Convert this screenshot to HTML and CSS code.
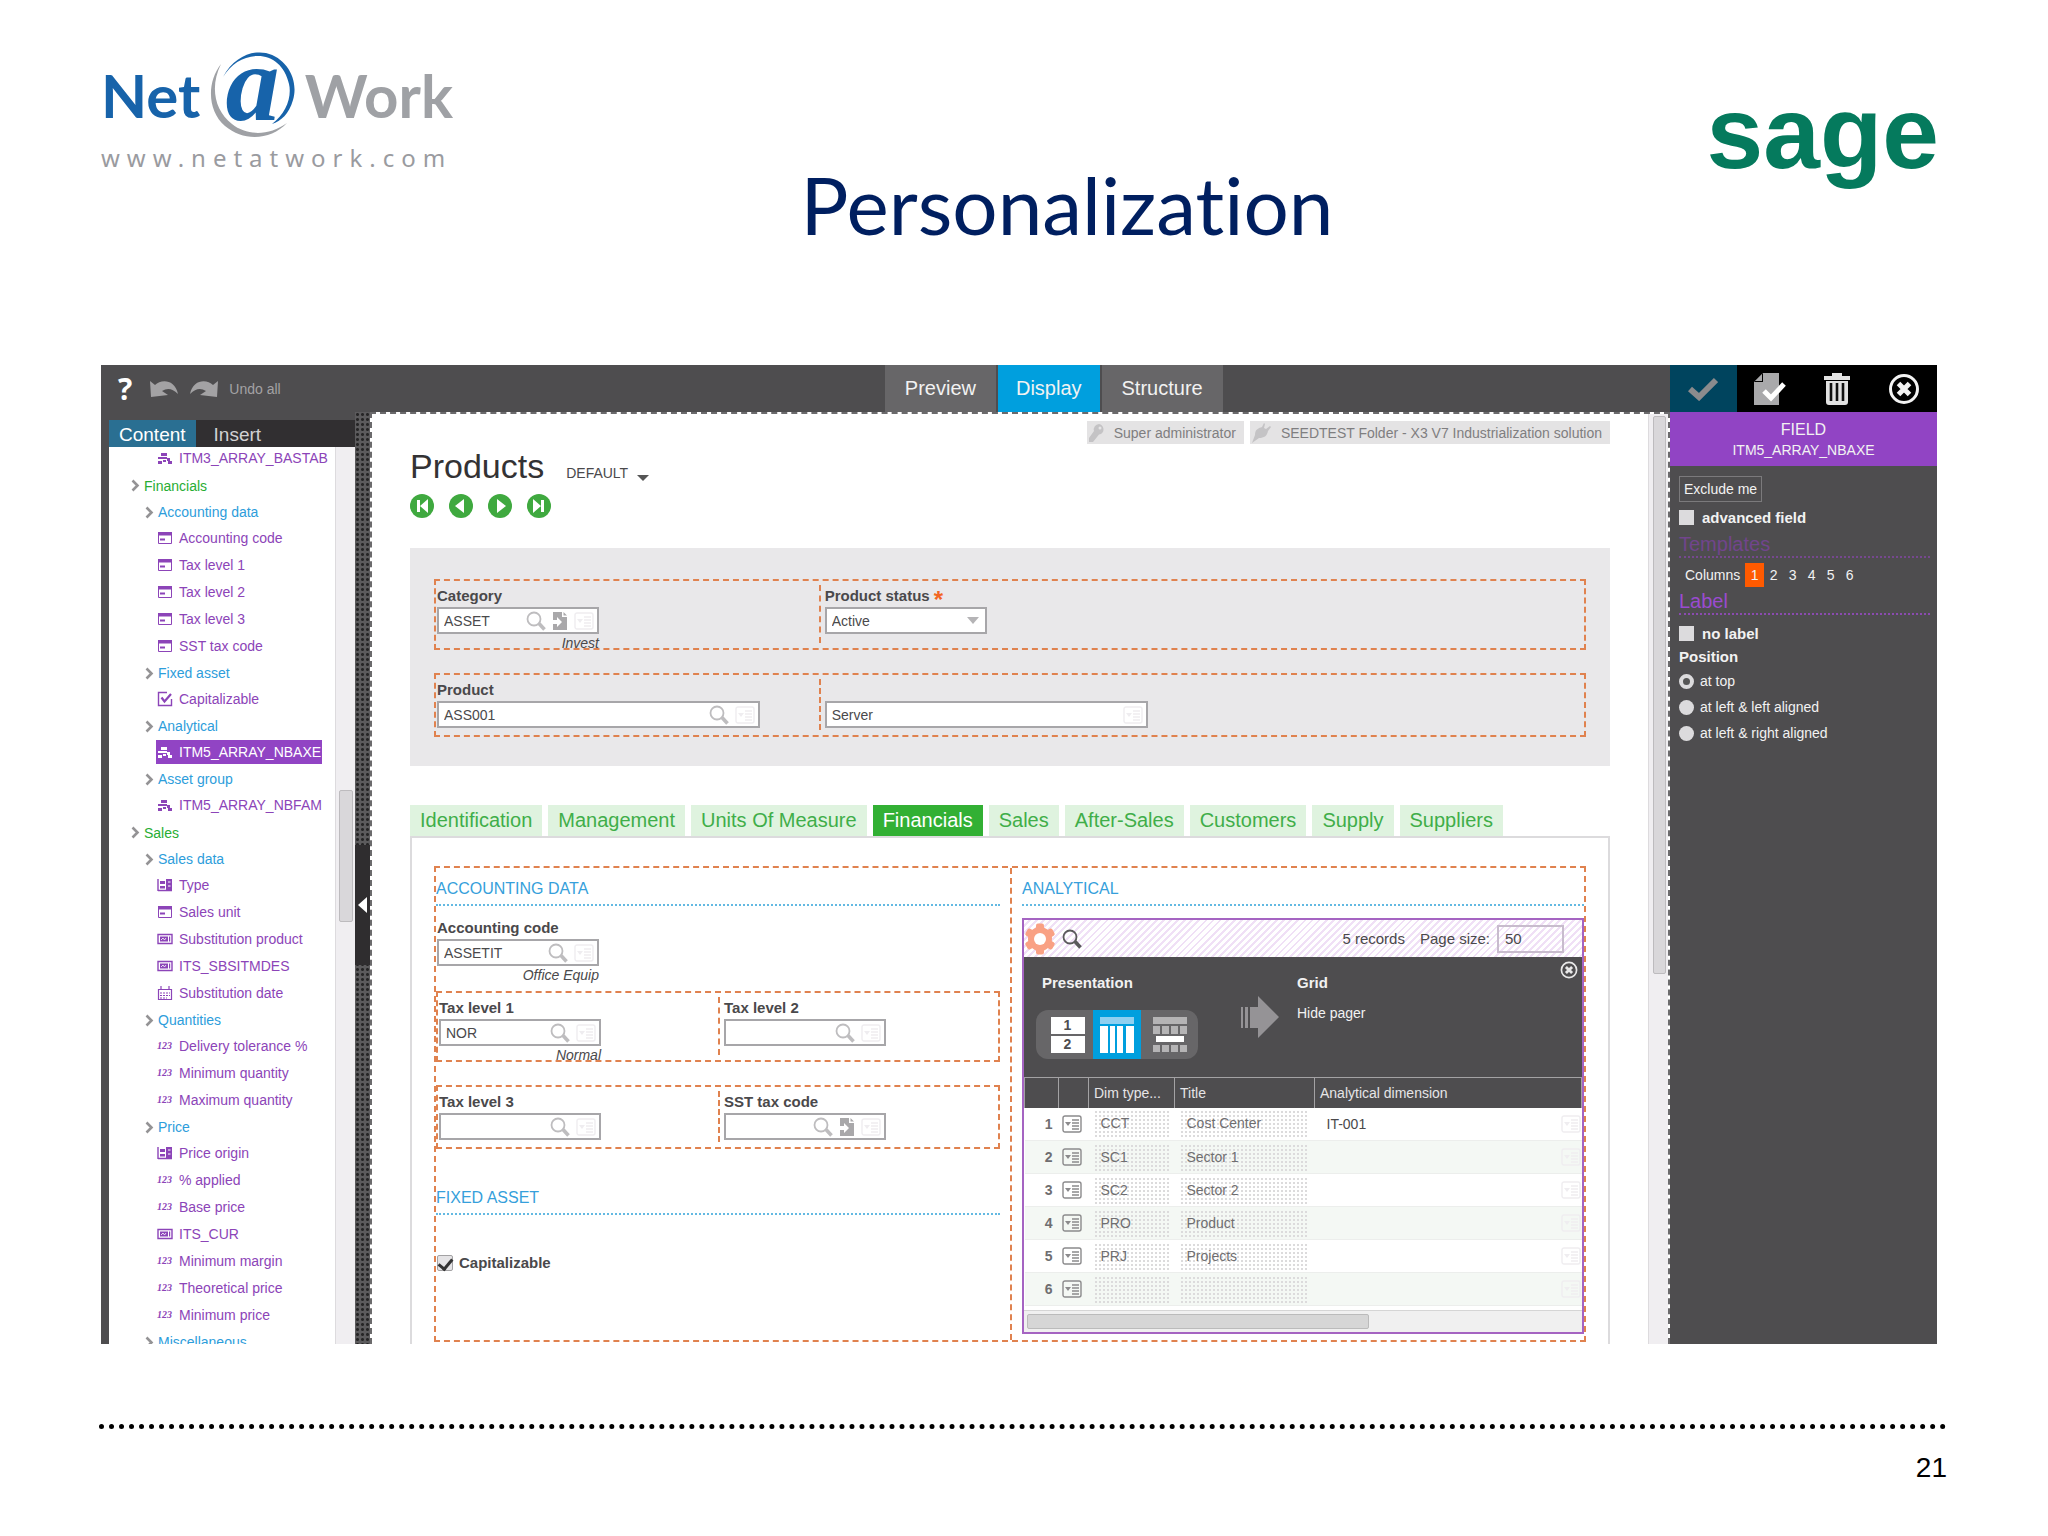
FILE: index.html
```html
<!DOCTYPE html>
<html lang="en">
<head>
  <meta charset="UTF-8">
  <meta name="viewport" content="width=device-width, initial-scale=1.0">
  <title>Personalization</title>
  <link rel="stylesheet" href="styles.css">
</head>
<body>

<!-- Shared icons -->
<svg class="sprite" aria-hidden="true">
  <symbol id="i-chevron" viewBox="0 0 9 13"><path d="M1.500 1.500L6.500 6.500L1.500 11.500" fill="none" stroke="currentColor" stroke-width="2.600"/></symbol>
  <symbol id="i-array" viewBox="0 0 16 16"><path d="M4 3h6v3H4zM1 7h9v2H1zM10 8h3v3h-3zM1 11h4v3H1zM6 10h3v2H6zM11 11h4v3h-4z" fill="currentColor"/></symbol>
  <symbol id="i-form" viewBox="0 0 16 16"><path d="M1.500 2.500h13v11h-13z" fill="none" stroke="currentColor"/><path d="M1 2h14v3.500H1zM3 8.500h5v2H3z" fill="currentColor"/></symbol>
  <symbol id="i-tick" viewBox="0 0 16 16"><path d="M10 1.500H1.500v13h13V8" fill="none" stroke="currentColor" stroke-width="1.400"/><path d="M4.500 6.500l3 4L14 3" fill="none" stroke="currentColor" stroke-width="2.200"/></symbol>
  <symbol id="i-combo" viewBox="0 0 16 16"><path d="M1 2v12M1 13.500h14" fill="none" stroke="currentColor" stroke-width="1.400"/><path d="M3 4h5v3H3zM3 9h5v2.500H3zM9 2h6v12H9z" fill="currentColor"/><path d="M11 5h2.500M11 9h2.500" stroke="#fff"/></symbol>
  <symbol id="i-text" viewBox="0 0 16 16"><path d="M1 3.500h14v9H1z" fill="none" stroke="currentColor" stroke-width="1.400"/><path d="M3 5.500h8v5H3zM12 5.500h1.200v5H12z" fill="currentColor"/><path d="M4 9l2-2 1.500 2L9 7" stroke="#fff" fill="none" stroke-width=".8"/></symbol>
  <symbol id="i-date" viewBox="0 0 16 16"><path d="M1.500 4.500h13v10h-13zM4 1v4M12 1v4" fill="none" stroke="currentColor" stroke-width="1.200"/><path d="M3 8h10M3 10.500h10M3 13h7" stroke="currentColor" stroke-dasharray="2 1"/></symbol>
  <symbol id="i-search" viewBox="0 0 20 20"><circle cx="8" cy="8" r="6.500" fill="none" stroke="currentColor" stroke-width="1.800"/><path d="M13 12.500l5.500 6" stroke="currentColor" stroke-width="3.600"/></symbol>
  <symbol id="i-goto" viewBox="0 0 16 20"><path d="M1 1h9v5h5v13H1v-6h4v3l5-5-5-5v3H1zM11.500 1L15 4.500h-3.500z" fill="currentColor"/></symbol>
  <symbol id="i-list" viewBox="0 0 20 18"><rect x="1" y="1" width="18" height="16" rx="2" fill="none" stroke="currentColor" stroke-width="1.400"/><path d="M3 7h6L6 11z" fill="currentColor"/><path d="M10 5h7M10 8h7M10 11h7M10 14h7" stroke="currentColor" stroke-width="1.400"/></symbol>
  <symbol id="i-close" viewBox="0 0 32 32"><circle cx="16" cy="16" r="13.500" fill="none" stroke="currentColor" stroke-width="3"/><path d="M10.500 10.500l11 11M21.500 10.500l-11 11" stroke="currentColor" stroke-width="5"/></symbol>
  <symbol id="i-undo" viewBox="0 0 30 20"><path d="M1 2l5 4c6-6 20-6 23 9C23 9 18 9 13 12l6 4L2 18z" fill="currentColor"/></symbol>
</svg>

<div class="slide">
  <header class="slide-header">
    <div class="brand">
      <div class="brand-name">
        <span class="brand-net">Net</span>
        <span class="brand-at">
          <svg viewBox="0 0 88 90" width="88" height="90" aria-hidden="true">
            <path d="M14 27C24 8 42 0 57 3C78 8 90 30 84 50C80 64 72 71 63 74C77 64 83 47 80 34C76 15 62 5 47 6C33 7 22 14 14 27Z" fill="#1763aa"/>
            <path d="M12 14C-2 32-2 60 16 76C35 92 62 90 78 73C60 86 38 86 23 74C5 60 1 36 12 14Z" fill="#9fa1a5"/>
          </svg>
          <i>a</i>
        </span>
        <span class="brand-work">Work</span>
      </div>
      <div class="brand-url">www.netatwork.com</div>
    </div>
    <h1>Personalization</h1>
    <div class="sage">sage</div>
  </header>

  <div class="app">
    <div class="topbar">
      <div class="topbar-left">
        <button class="help">?</button>
        <button aria-label="Undo"><svg width="30" height="20"><use href="#i-undo"/></svg></button>
        <button aria-label="Redo"><svg class="flip" width="30" height="20"><use href="#i-undo"/></svg></button>
        <button class="undo-all">Undo all</button>
      </div>
      <nav class="modes">
        <button>Preview</button>
        <button class="active">Display</button>
        <button>Structure</button>
      </nav>
      <div class="topbar-right"></div>
    </div>

    <aside class="sidebar">
      <div class="side-tabs">
        <button class="active">Content</button>
        <button>Insert</button>
      </div>
      <div class="side-body">
        <ul class="tree">
          <li><a href="#"><svg><use href="#i-array"/></svg>ITM3_ARRAY_BASTAB</a></li>
          <li class="l1"><a href="#"><svg><use href="#i-chevron"/></svg>Financials</a></li>
          <li class="l2"><a href="#"><svg><use href="#i-chevron"/></svg>Accounting data</a></li>
          <li><a href="#"><svg><use href="#i-form"/></svg>Accounting code</a></li>
          <li><a href="#"><svg><use href="#i-form"/></svg>Tax level 1</a></li>
          <li><a href="#"><svg><use href="#i-form"/></svg>Tax level 2</a></li>
          <li><a href="#"><svg><use href="#i-form"/></svg>Tax level 3</a></li>
          <li><a href="#"><svg><use href="#i-form"/></svg>SST tax code</a></li>
          <li class="l2"><a href="#"><svg><use href="#i-chevron"/></svg>Fixed asset</a></li>
          <li><a href="#"><svg><use href="#i-tick"/></svg>Capitalizable</a></li>
          <li class="l2"><a href="#"><svg><use href="#i-chevron"/></svg>Analytical</a></li>
          <li class="selected"><a href="#"><svg><use href="#i-array"/></svg>ITM5_ARRAY_NBAXE</a></li>
          <li class="l2"><a href="#"><svg><use href="#i-chevron"/></svg>Asset group</a></li>
          <li><a href="#"><svg><use href="#i-array"/></svg>ITM5_ARRAY_NBFAM</a></li>
          <li class="l1"><a href="#"><svg><use href="#i-chevron"/></svg>Sales</a></li>
          <li class="l2"><a href="#"><svg><use href="#i-chevron"/></svg>Sales data</a></li>
          <li><a href="#"><svg><use href="#i-combo"/></svg>Type</a></li>
          <li><a href="#"><svg><use href="#i-form"/></svg>Sales unit</a></li>
          <li><a href="#"><svg><use href="#i-text"/></svg>Substitution product</a></li>
          <li><a href="#"><svg><use href="#i-text"/></svg>ITS_SBSITMDES</a></li>
          <li><a href="#"><svg><use href="#i-date"/></svg>Substitution date</a></li>
          <li class="l2"><a href="#"><svg><use href="#i-chevron"/></svg>Quantities</a></li>
          <li><a href="#"><span class="num">123</span>Delivery tolerance %</a></li>
          <li><a href="#"><span class="num">123</span>Minimum quantity</a></li>
          <li><a href="#"><span class="num">123</span>Maximum quantity</a></li>
          <li class="l2"><a href="#"><svg><use href="#i-chevron"/></svg>Price</a></li>
          <li><a href="#"><svg><use href="#i-combo"/></svg>Price origin</a></li>
          <li><a href="#"><span class="num">123</span>% applied</a></li>
          <li><a href="#"><span class="num">123</span>Base price</a></li>
          <li><a href="#"><svg><use href="#i-text"/></svg>ITS_CUR</a></li>
          <li><a href="#"><span class="num">123</span>Minimum margin</a></li>
          <li><a href="#"><span class="num">123</span>Theoretical price</a></li>
          <li><a href="#"><span class="num">123</span>Minimum price</a></li>
          <li class="l2"><a href="#"><svg><use href="#i-chevron"/></svg>Miscellaneous</a></li>
        </ul>
        <div class="scroll side-scroll"><div class="thumb"></div></div>
      </div>
    </aside>
    <div class="splitter">
      <button aria-label="Collapse panel"><svg width="9" height="16" viewBox="0 0 9 16"><path d="M9 0v16L0 8z" fill="#fff"/></svg></button>
    </div>

    <main class="main">
      <div class="page">
        <div class="badges">
          <span class="badge"><svg width="16" height="20" viewBox="0 0 16 20"><path d="M10 1a5.500 5.500 0 0 1 2 10l-2 .5L4 19H0v-4l5-7A5.500 5.500 0 0 1 10 1z" fill="#c4c3c5"/><circle cx="11" cy="5" r="1.500" fill="#e6e5e6"/></svg>Super administrator</span>
          <span class="badge"><svg width="20" height="20" viewBox="0 0 20 20"><path d="M0 20l3-8c0-6 4-7 7-8l2-4 1 1-1 4 2 1 4-3 1 1-3 4c-1 5-4 7-9 7z" fill="#c4c3c5"/></svg>SEEDTEST Folder - X3 V7 Industrialization solution</span>
        </div>
        <div class="title-row">
          <h2>Products</h2>
          <button class="variant">DEFAULT <svg width="12" height="6" viewBox="0 0 12 6"><path d="M0 0h12L6 6z" fill="#555"/></svg></button>
        </div>
        <div class="record-nav">
          <button aria-label="First"><svg viewBox="0 0 24 24"><path d="M7 6v12h3V6zM18 5v14l-8-7z" fill="#fff"/></svg></button>
          <button aria-label="Previous"><svg viewBox="0 0 24 24"><path d="M15 5v14L6 12z" fill="#fff"/></svg></button>
          <button aria-label="Next"><svg viewBox="0 0 24 24"><path d="M9 5v14l9-7z" fill="#fff"/></svg></button>
          <button aria-label="Last"><svg viewBox="0 0 24 24"><path d="M17 6v12h-3V6zM6 5v14l8-7z" fill="#fff"/></svg></button>
        </div>

        <section class="summary">
          <div class="row thirds with-hint">
            <div class="cell">
              <label for="category">Category</label>
              <div class="box">
                <input id="category" type="text" value="ASSET">
                <svg class="ic"><use href="#i-search"/></svg><svg class="ic goto"><use href="#i-goto"/></svg><svg class="ic faint"><use href="#i-list"/></svg>
                <span class="hint">Invest</span>
              </div>
            </div>
            <div class="cell">
              <label for="status">Product status <b class="req">*</b></label>
              <div class="box">
                <select id="status"><option>Active</option></select>
                <svg class="caret" width="12" height="7" viewBox="0 0 12 7"><path d="M0 0h12L6 7z" fill="#b5b4b6"/></svg>
              </div>
            </div>
          </div>
          <div class="row thirds">
            <div class="cell">
              <label for="product">Product</label>
              <div class="box wide">
                <input id="product" type="text" value="ASS001">
                <svg class="ic"><use href="#i-search"/></svg><svg class="ic faint"><use href="#i-list"/></svg>
              </div>
            </div>
            <div class="cell">
              <label for="description">&nbsp;</label>
              <div class="box wide">
                <input id="description" type="text" value="Server">
                <svg class="ic faint"><use href="#i-list"/></svg>
              </div>
            </div>
          </div>
        </section>

        <nav class="tabs">
          <button>Identification</button>
          <button>Management</button>
          <button>Units Of Measure</button>
          <button class="active">Financials</button>
          <button>Sales</button>
          <button>After-Sales</button>
          <button>Customers</button>
          <button>Supply</button>
          <button>Suppliers</button>
        </nav>

        <div class="panel">
          <div class="columns">
            <section class="col-left">
              <h3>ACCOUNTING DATA</h3>
              <div class="field">
                <label for="acc-code">Accounting code</label>
                <div class="box">
                  <input id="acc-code" type="text" value="ASSETIT">
                  <svg class="ic"><use href="#i-search"/></svg><svg class="ic faint"><use href="#i-list"/></svg>
                  <span class="hint">Office Equip</span>
                </div>
              </div>
              <div class="row halves with-hint">
                <div class="cell">
                  <label for="tax1">Tax level 1</label>
                  <div class="box">
                    <input id="tax1" type="text" value="NOR">
                    <svg class="ic"><use href="#i-search"/></svg><svg class="ic faint"><use href="#i-list"/></svg>
                    <span class="hint">Normal</span>
                  </div>
                </div>
                <div class="cell">
                  <label for="tax2">Tax level 2</label>
                  <div class="box">
                    <input id="tax2" type="text">
                    <svg class="ic"><use href="#i-search"/></svg><svg class="ic faint"><use href="#i-list"/></svg>
                  </div>
                </div>
              </div>
              <div class="row halves">
                <div class="cell">
                  <label for="tax3">Tax level 3</label>
                  <div class="box">
                    <input id="tax3" type="text">
                    <svg class="ic"><use href="#i-search"/></svg><svg class="ic faint"><use href="#i-list"/></svg>
                  </div>
                </div>
                <div class="cell">
                  <label for="sst">SST tax code</label>
                  <div class="box">
                    <input id="sst" type="text">
                    <svg class="ic"><use href="#i-search"/></svg><svg class="ic goto"><use href="#i-goto"/></svg><svg class="ic faint"><use href="#i-list"/></svg>
                  </div>
                </div>
              </div>
              <h3 class="second">FIXED ASSET</h3>
              <label class="check"><input type="checkbox" checked>Capitalizable</label>
            </section>

            <section class="col-right">
              <h3>ANALYTICAL</h3>
              <div class="grid">
                <div class="grid-bar">
                  <svg width="32" height="32" viewBox="-16 -16 32 32"><g fill="#f9a184"><circle r="12"/><rect x="-4" y="-15.500" width="8" height="31" rx="2"/><rect x="-4" y="-15.500" width="8" height="31" rx="2" transform="rotate(60)"/><rect x="-4" y="-15.500" width="8" height="31" rx="2" transform="rotate(120)"/></g><circle r="6" fill="#fff"/></svg>
                  <svg class="find" width="20" height="20"><use href="#i-search"/></svg>
                  <span class="count">5 records</span>
                  <label for="page-size">Page size:</label>
                  <input id="page-size" type="text" value="50">
                </div>
                <div class="options">
                  <div class="presentation">
                    <h4>Presentation</h4>
                    <div class="switch">
                      <button class="pages" aria-label="Form"><span>1</span><span>2</span></button>
                      <button class="active" aria-label="Grid"><svg width="34" height="36" viewBox="0 0 34 36"><path d="M0 0h34v7H0z" fill="#8fd0f0"/><path d="M0 9h8v27H0zM10 9h5v27h-5zM17 9h6v27h-6zM26 9h8v27h-8z" fill="#fff"/></svg></button>
                      <button aria-label="Mixed"><svg width="34" height="36" viewBox="0 0 34 36"><path d="M0 0h34v7H0zM0 9h7v8H0zM9 9h7v8H9zM18 9h7v8h-7zM27 9h7v8h-7zM0 28h7v7H0zM9 28h7v7H9zM18 28h7v7h-7zM27 28h7v7h-7z" fill="#b5b4b5"/><path d="M3 19h28v6H3z" fill="#fff"/></svg></button>
                    </div>
                  </div>
                  <svg class="arrow" width="38" height="42" viewBox="0 0 38 42"><path d="M0 11h2v21H0zM4 11h3v21H4zM9 11h8V0l21 21-21 21V32H9z" fill="#959396"/></svg>
                  <div class="grid-opts">
                    <h4>Grid</h4>
                    <a href="#">Hide pager</a>
                  </div>
                  <button class="close" aria-label="Close"><svg width="18" height="18"><use href="#i-close"/></svg></button>
                </div>
                <table>
                  <thead>
                    <tr><th class="c-num"></th><th class="c-act"></th><th class="c-dim">Dim type...</th><th class="c-title">Title</th><th>Analytical dimension</th></tr>
                  </thead>
                  <tbody>
                    <tr><td class="n">1</td><td><svg class="ic act"><use href="#i-list"/></svg></td><td><div class="ro">CCT</div></td><td><div class="ro">Cost Center</div></td><td><div class="val">IT-001<svg class="ic faint"><use href="#i-list"/></svg></div></td></tr>
                    <tr><td class="n">2</td><td><svg class="ic act"><use href="#i-list"/></svg></td><td><div class="ro">SC1</div></td><td><div class="ro">Sector 1</div></td><td><div class="val"><svg class="ic faint"><use href="#i-list"/></svg></div></td></tr>
                    <tr><td class="n">3</td><td><svg class="ic act"><use href="#i-list"/></svg></td><td><div class="ro">SC2</div></td><td><div class="ro">Sector 2</div></td><td><div class="val"><svg class="ic faint"><use href="#i-list"/></svg></div></td></tr>
                    <tr><td class="n">4</td><td><svg class="ic act"><use href="#i-list"/></svg></td><td><div class="ro">PRO</div></td><td><div class="ro">Product</div></td><td><div class="val"><svg class="ic faint"><use href="#i-list"/></svg></div></td></tr>
                    <tr><td class="n">5</td><td><svg class="ic act"><use href="#i-list"/></svg></td><td><div class="ro">PRJ</div></td><td><div class="ro">Projects</div></td><td><div class="val"><svg class="ic faint"><use href="#i-list"/></svg></div></td></tr>
                    <tr><td class="n">6</td><td><svg class="ic act"><use href="#i-list"/></svg></td><td><div class="ro"></div></td><td><div class="ro"></div></td><td><div class="val"><svg class="ic faint"><use href="#i-list"/></svg></div></td></tr>
                  </tbody>
                </table>
                <div class="hscroll"><div class="thumb"></div></div>
              </div>
            </section>
          </div>
        </div>
      </div>
      <div class="scroll main-scroll"><div class="thumb"></div></div>
    </main>

    <aside class="props">
      <div class="actions">
        <button class="apply" aria-label="Apply"><svg width="30" height="24" viewBox="0 0 30 24"><path d="M2 12l9 8L28 3" fill="none" stroke="#8b8b8d" stroke-width="6"/></svg></button>
        <button aria-label="Save"><svg width="34" height="34" viewBox="0 0 34 34"><path d="M10 1h16v32H1V10z" fill="#a9a9ab"/><path d="M1 10l9-9v9z" fill="#000"/><path d="M2 9l7-7v7z" fill="#a9a9ab"/><path d="M11 19l7 7L31 12" fill="none" stroke="#fff" stroke-width="5"/></svg></button>
        <button aria-label="Delete"><svg width="26" height="34" viewBox="0 0 26 34"><path d="M0 4h8V1h10v3h8v4H0zM2 9h22v21q0 3-3 3H5q-3 0-3-3z" fill="#e2e2e2"/><path d="M7 11v18M13 11v18M19 11v18" stroke="#111" stroke-width="2.600"/></svg></button>
        <button aria-label="Close"><svg width="32" height="32"><use href="#i-close"/></svg></button>
      </div>
      <div class="props-title"><span>FIELD</span><small>ITM5_ARRAY_NBAXE</small></div>
      <div class="props-body">
        <button class="exclude">Exclude me</button>
        <label class="opt bold"><input type="checkbox">advanced field</label>
        <h5 class="dim">Templates</h5>
        <div class="cols">
          <span>Columns</span>
          <button class="active">1</button><button>2</button><button>3</button><button>4</button><button>5</button><button>6</button>
        </div>
        <h5>Label</h5>
        <label class="opt bold first">
          <input type="checkbox">no label
        </label>
        <div class="legend">Position</div>
        <label class="opt"><input type="radio" name="position" checked>at top</label>
        <label class="opt"><input type="radio" name="position">at left &amp; left aligned</label>
        <label class="opt"><input type="radio" name="position">at left &amp; right aligned</label>
      </div>
    </aside>
  </div>

  <footer class="slide-footer">21</footer>
</div>

</body>
</html>
```

FILE: styles.css
```css
* {
  box-sizing: border-box;
}

body {
  margin: 0;
  background-color: #fff;
  font-family: "Liberation Sans", Arial, sans-serif;
  font-size: 14px;
  color: #4a494b;
}

button, input, select {
  font: inherit;
  color: inherit;
  margin: 0;
  padding: 0;
  border: none;
  background: none;
}

a {
  color: inherit;
  text-decoration: none;
}

svg {
  display: block;
  flex: none;
}

h1, h2, h3, h4, h5, ul {
  margin: 0;
  padding: 0;
}

.sprite {
  position: absolute;
  width: 0;
  height: 0;
}

/* Slide */
.slide {
  display: grid;
  grid-template-rows: auto 1fr auto;
  height: 100vh;
}

.slide-header {
  display: flex;
  height: 365px;
  padding: 0 109px 0 101px;
}

.brand {
  width: 352px;
  padding-top: 50px;
}

.brand-name {
  display: flex;
  align-items: center;
  justify-content: space-between;
  height: 90px;
  font-family: Lato, sans-serif;
  font-size: 60px;
  font-weight: bold;
  line-height: 88px;
}

.brand-net {
  color: #1763aa;
}

.brand-at {
  display: grid;
  width: 88px;
  place-items: center;
}

.brand-at > * {
  grid-area: 1 / 1;
}

.brand-at i {
  font-family: "Liberation Serif", serif;
  font-size: 108px;
  line-height: 68px;
  height: 90px;
  color: #1763aa;
}

.brand-work {
  color: #9fa1a5;
}

.brand-url {
  font-family: "Noto Sans", sans-serif;
  font-size: 24px;
  line-height: 36px;
  letter-spacing: 7px;
  white-space: nowrap;
  color: #9a9b9f;
}

.slide-header h1 {
  flex: 1;
  padding-top: 156px;
  text-align: center;
  font-family: Lato, sans-serif;
  font-size: 80px;
  font-weight: normal;
  font-variant-ligatures: none;
  line-height: 96px;
  color: #001f60;
}

.sage {
  width: 258px;
  padding-top: 85px;
  text-align: right;
  font-size: 102px;
  font-weight: bold;
  line-height: 96px;
  color: #057a5d;
}

.slide-footer {
  height: 192px;
  margin: 0 101px 0 99px;
  padding-top: 80px;
  text-align: right;
  font-size: 28px;
  line-height: 34px;
  color: #000;
}

.slide-footer::before {
  content: "";
  display: block;
  margin-bottom: 22px;
  border-top: 5px dotted #000;
}

/* Application */
.app {
  display: grid;
  grid-template-columns: 254px 15px 1fr 267px;
  grid-template-rows: 47px 1fr;
  min-height: 0;
  margin: 0 111px 0 101px;
  overflow: hidden;
  background-color: #4e4d4f;
}

.topbar {
  grid-column: 1 / 4;
  display: flex;
}

.topbar-left {
  flex: 12;
  display: flex;
  align-items: center;
  gap: 10px;
  padding-left: 17px;
  color: #a3a2a4;
}

.topbar-right {
  flex: 7;
}

.topbar .help {
  margin-right: 7px;
  font-family: "Open Sans", sans-serif;
  font-size: 30px;
  font-weight: bold;
  line-height: 40px;
  color: #fff;
}

.flip {
  transform: scaleX(-1);
}

.modes {
  display: flex;
  gap: 2px;
}

.modes button {
  padding: 0 20px;
  font-size: 20px;
  background-color: #676668;
  color: #f2f2f2;
}

.modes .active {
  padding: 0 18px;
  background-color: #009fde;
}

/* Left side */
.sidebar {
  grid-row: 2;
  display: flex;
  flex-direction: column;
  min-height: 0;
  padding: 8px 0 0 8px;
}

.side-tabs {
  display: flex;
  height: 27px;
  background-color: #312f31;
}

.side-tabs button {
  padding: 2px 10px 0;
  font-size: 19px;
  color: #d2d1d3;
}

.side-tabs button + button {
  padding-left: 18px;
}

.side-tabs .active {
  background-color: #2a6f92;
  color: #fff;
}

.side-body {
  flex: 1;
  display: flex;
  min-height: 0;
  overflow: hidden;
  background-color: #fff;
}

.tree {
  flex: 1;
  margin-top: -3px;
  list-style: none;
  color: #8c44b8;
}

.tree li {
  display: flex;
  align-items: center;
  height: 27px;
  padding-left: 47px;
}

.tree a {
  display: flex;
  align-items: center;
  gap: 6px;
  height: 24px;
  padding: 0 1px;
  white-space: nowrap;
}

.tree svg {
  width: 16px;
  height: 16px;
}

.tree .l1 svg, .tree .l2 svg {
  width: 9px;
  height: 13px;
  color: #949395;
}

.tree .l1, .tree .l2 {
  padding-top: 2px;
}

.tree .l1 {
  padding-left: 21px;
  color: #27ad33;
}

.tree .l2 {
  height: 26px;
  padding-left: 35px;
  color: #2d9ddb;
}

.tree .l1 a, .tree .l2 a {
  gap: 4px;
}

.tree .selected a {
  background-color: #9144c4;
  color: #fff;
}

.num {
  width: 16px;
  font-family: "Liberation Serif", serif;
  font-size: 10px;
  font-style: italic;
  font-weight: bold;
}

.scroll {
  padding: 0 4px;
  border-left: 1px solid #dddbde;
  background-color: #f0eef1;
}

.scroll .thumb {
  border: 1px solid #bdbbbe;
  border-radius: 2px;
  background-color: #d9d7da;
}

.side-scroll {
  width: 20px;
  padding: 343px 2px 0 3px;
}

.side-scroll .thumb {
  height: 132px;
}

.splitter {
  grid-row: 2;
  display: flex;
  align-items: center;
  padding-top: 54px;
  background: radial-gradient(circle, #262526 1px, transparent 2px) 0 0 / 5px 5px #5c5b5d;
}

.splitter button {
  display: grid;
  place-items: center;
  width: 15px;
  height: 120px;
  background-color: #2f2d2f;
}

/* Main page */
.main {
  grid-row: 2;
  display: flex;
  min-width: 0;
  min-height: 0;
  overflow: hidden;
  border: 2px dashed #6b6a6c;
  border-bottom: none;
  background-color: #fff;
}

.page {
  flex: 1;
  min-width: 0;
  padding: 7px 38px 0 38px;
}

.main-scroll {
  width: 20px;
  padding: 2px 2px 0 4px;
}

.main-scroll .thumb {
  height: 558px;
}

.badges {
  display: flex;
  justify-content: flex-end;
  gap: 6px;
}

.badge {
  display: flex;
  align-items: center;
  gap: 9px;
  height: 23px;
  padding: 0 8px 0 2px;
  background-color: #e4e3e4;
  color: #7f7e80;
}

.title-row {
  display: flex;
  align-items: baseline;
  gap: 22px;
  margin-top: 3px;
}

.title-row h2 {
  font-size: 34px;
  font-weight: normal;
  line-height: 38px;
  color: #333234;
}

.variant {
  display: flex;
  align-items: flex-end;
  gap: 9px;
}

.record-nav {
  display: flex;
  gap: 15px;
  margin: 9px 0 30px;
}

.record-nav button {
  width: 24px;
  height: 24px;
  border-radius: 50%;
  background-color: #3fa93f;
}

.summary {
  padding: 31px 24px 29px;
  background-color: #e9e8ea;
}

/* Dashed layout rows */
.row {
  display: grid;
  padding: 4px 0 5px;
  border: 2px dashed #e0824f;
}

.row + .row {
  margin-top: 23px;
}

.thirds {
  grid-template-columns: 1fr 2fr;
}

.halves {
  grid-template-columns: 1fr 1fr;
}

.cell {
  padding: 2px 0 2px 1px;
}

.with-hint .cell {
  padding-bottom: 9px;
}

.cell + .cell {
  padding-left: 4px;
  border-left: 2px dashed #e0824f;
}

.cell label, .field label {
  display: block;
  height: 20px;
  font-size: 15px;
  font-weight: bold;
  line-height: 18px;
}

.req {
  font-size: 24px;
  line-height: 0;
  vertical-align: -7px;
  color: #f26522;
}

.box {
  position: relative;
  display: flex;
  align-items: center;
  gap: 6px;
  width: 162px;
  height: 27px;
  padding: 0 3px 0 5px;
  border: 2px solid #a7a6a9;
  background-color: #fff;
}

.box.wide {
  width: 323px;
}

.box input, .box select {
  flex: 1;
  width: 0;
  min-width: 0;
  height: 23px;
  appearance: none;
}

.caret {
  margin-right: 3px;
}

.ic {
  width: 20px;
  height: 20px;
  color: #bebdbf;
}

.ic.goto {
  width: 16px;
  color: #a9a8aa;
}

.ic.faint {
  color: #efedf0;
}

.hint {
  position: absolute;
  top: 25px;
  right: -2px;
  font-style: italic;
  line-height: 18px;
  white-space: nowrap;
}

/* Tabs */
.tabs {
  display: flex;
  gap: 6px;
  margin-top: 39px;
}

.tabs button {
  height: 31px;
  padding: 0 10px;
  font-size: 20px;
  background-color: #dff3df;
  color: #3fae49;
}

.tabs .active {
  background-color: #32b034;
  color: #fff;
}

.panel {
  height: 600px;
  padding: 28px 22px 0;
  border: 2px solid #dcdbdd;
}

.columns {
  display: grid;
  grid-template-columns: 1fr 1fr;
  height: 476px;
  border: 2px dashed #e0824f;
}

.col-left {
  padding: 0 10px 0 0;
}

.col-right {
  padding-left: 10px;
  border-left: 2px dashed #e0824f;
}

.columns h3 {
  padding: 12px 0 6px;
  border-bottom: 2px dotted #63b9e2;
  font-size: 16px;
  font-weight: normal;
  line-height: 18px;
  color: #369fdb;
}

.columns h3.second {
  margin-top: 28px;
}

.field {
  margin: 13px 0 25px 1px;
}

.check {
  display: flex;
  align-items: center;
  gap: 6px;
  margin: 39px 0 0 1px;
  font-size: 15px;
  font-weight: bold;
}

.check input {
  display: flex;
  justify-content: center;
  width: 16px;
  height: 16px;
  border: 1px solid #a3a2a4;
  border-radius: 2px;
  background-color: #e5e4e6;
  appearance: none;
}

.check input:checked::before {
  content: "";
  width: 6px;
  height: 11px;
  border: solid #333;
  border-width: 0 3px 3px 0;
  transform: rotate(40deg);
}

/* Analytical grid */
.grid {
  margin-top: 12px;
  border: 2px solid #a564c2;
}

.grid-bar {
  display: flex;
  align-items: center;
  height: 37px;
  padding-right: 18px;
  font-size: 15px;
  background: repeating-linear-gradient(135deg, #fff 0 3px, #f0e0f6 3px 5px);
}

.grid-bar .find {
  margin-left: 6px;
  color: #5a595b;
}

.count {
  margin-left: auto;
}

.grid-bar label {
  margin: 0 7px 0 15px;
}

.grid-bar input {
  width: 67px;
  height: 28px;
  padding-left: 6px;
  border: 2px solid #c8bccd;
}

.options {
  position: relative;
  display: flex;
  height: 120px;
  padding: 17px 0 0 12px;
  background-color: #4e4d4f;
  color: #f2f2f2;
}

.options h4 {
  font-size: 15px;
  line-height: 18px;
}

.presentation h4 {
  padding-left: 6px;
}

.switch {
  display: flex;
  margin-top: 18px;
  border-radius: 12px;
  background-color: #676668;
}

.switch button {
  display: grid;
  place-items: center;
  width: 48px;
  height: 49px;
}

.switch button:first-child, .switch button:last-child {
  width: 57px;
}

.switch .active {
  background-color: #009fde;
}

.switch .pages {
  align-content: center;
  gap: 2px;
  padding-left: 6px;
}

.pages span {
  width: 34px;
  background-color: #fff;
  font-weight: bold;
  line-height: 17px;
  color: #4e4d4f;
}

.arrow {
  margin: 22px 18px 0 43px;
}

.grid-opts a {
  display: block;
  margin-top: 12px;
  line-height: 18px;
}

.options .close {
  position: absolute;
  top: 4px;
  right: 4px;
  color: #e8e8e8;
}

.grid table {
  width: 100%;
  table-layout: fixed;
  border-collapse: collapse;
}

.grid th {
  height: 30px;
  padding: 0 5px;
  border: 1px solid #a3a2a4;
  border-bottom: none;
  background-color: #4e4d4f;
  text-align: left;
  font-weight: normal;
  white-space: nowrap;
  color: #e6e5e7;
}

.c-num {
  width: 34px;
}

.c-act {
  width: 30px;
}

.c-dim {
  width: 86px;
}

.c-title {
  width: 140px;
}

.grid td {
  height: 33px;
  padding: 0 6px 0 5px;
  border-bottom: 1px solid #eceeec;
  color: #6f6e70;
}

.grid tr:nth-child(even) td {
  background-color: #f4f8f4;
}

.grid td.n {
  text-align: right;
  font-weight: bold;
}

.grid td:nth-child(2) {
  padding: 0 3px;
}

.ic.act {
  color: #8b8a8c;
}

.ro {
  height: 27px;
  padding-left: 7px;
  line-height: 27px;
  background: radial-gradient(circle, #dcdbdc 1px, transparent 1px) 0 0 / 4px 4px;
}

.grid td:last-child {
  padding-right: 1px;
}

.val {
  display: flex;
  align-items: center;
  justify-content: space-between;
  padding-left: 7px;
  color: #4a494b;
}

.val .ic {
  margin-left: auto;
}

.hscroll {
  height: 22px;
  margin-top: 4px;
  padding: 3px;
  border-top: 1px solid #d5d5d5;
  background-color: #f0f0f0;
}

.hscroll .thumb {
  width: 62%;
  height: 15px;
  border: 1px solid #bbb;
  border-radius: 2px;
  background-color: #d6d6d6;
}

/* Property panel */
.props {
  grid-column: 4;
  grid-row: 1 / 3;
  color: #f2f2f2;
}

.actions {
  display: grid;
  grid-template-columns: repeat(4, 1fr);
  height: 47px;
  background-color: #000;
}

.actions button {
  display: grid;
  place-items: center;
}

.actions .apply {
  background-color: #00445e;
}

.props-title {
  display: flex;
  flex-direction: column;
  align-items: center;
  padding: 8px 0 6px;
  background-color: #9144c4;
  line-height: 20px;
}

.props-title span {
  font-size: 16px;
}

.props-title small {
  font-size: 14px;
}

.props-body {
  padding: 10px 7px 0 9px;
}

.exclude {
  height: 26px;
  margin-bottom: 3px;
  padding: 0 4px;
  border: 1px solid #7b7a7c;
}

.opt {
  display: flex;
  align-items: center;
  gap: 6px;
  height: 26px;
}

.opt.bold {
  gap: 8px;
  height: 25px;
  font-size: 15px;
  font-weight: bold;
}

.opt.first {
  margin-top: 6px;
}

.opt input {
  width: 15px;
  height: 15px;
  background-color: #dcdbdd;
  appearance: none;
}

.opt input[type="radio"] {
  border-radius: 50%;
}

.opt input[type="radio"]:checked {
  border: 4px solid #dcdbdd;
  background-color: #555;
}

.props h5 {
  height: 28px;
  border-bottom: 2px dotted #8a4bb0;
  font-size: 20px;
  font-weight: normal;
  line-height: 28px;
  color: #9a4bd0;
}

.props h5.dim {
  border-color: #76488f;
  color: #71458c;
}

.cols {
  display: flex;
  align-items: center;
  margin-top: 5px;
  padding-left: 6px;
}

.cols span {
  margin-right: 5px;
}

.cols button {
  width: 19px;
  height: 24px;
}

.cols .active {
  background-color: #ff5a00;
}

.legend {
  font-size: 15px;
  font-weight: bold;
  line-height: 22px;
}
```
